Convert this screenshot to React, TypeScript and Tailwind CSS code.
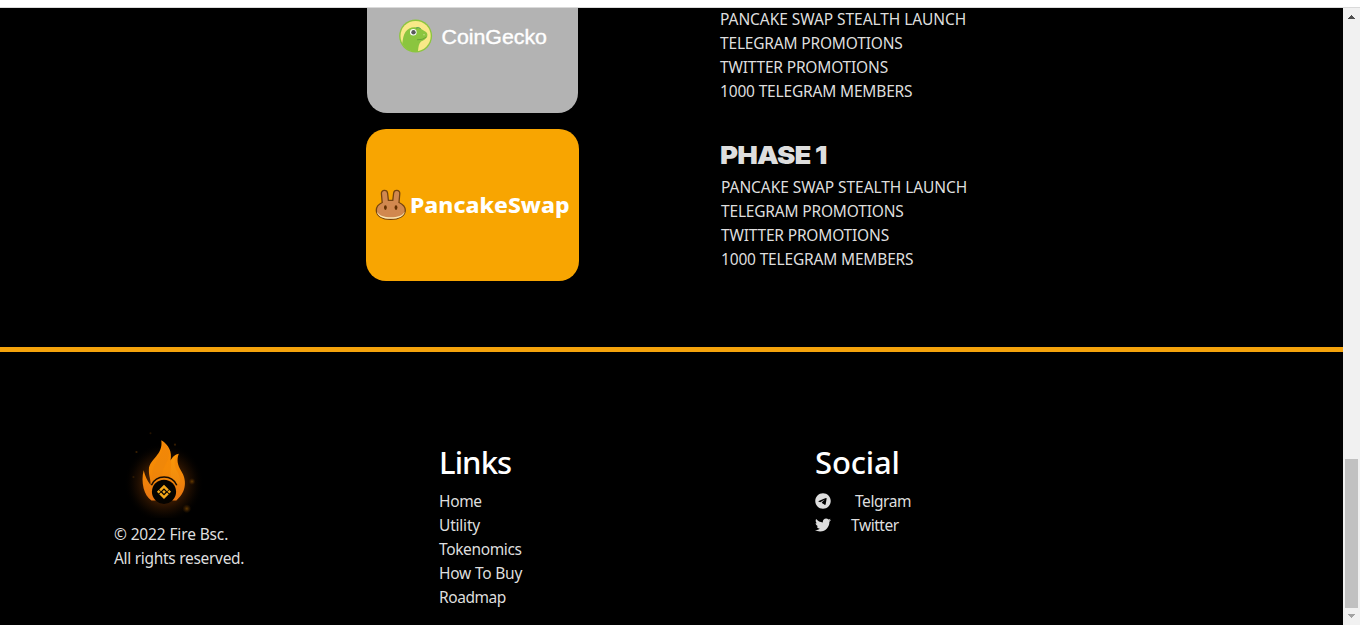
import { FaTelegram, FaTwitter } from "react-icons/fa6";

const goals = [
  { label: "PANCAKE SWAP STEALTH LAUNCH", tracking: "tracking-[-0.06px]" },
  { label: "TELEGRAM PROMOTIONS", tracking: "tracking-[-0.18px]" },
  { label: "TWITTER PROMOTIONS", tracking: "tracking-[-0.18px]" },
  { label: "1000 TELEGRAM MEMBERS", tracking: "tracking-[-0.17px]" },
];

const links = [
  { label: "Home", tracking: "tracking-[-0.35px]" },
  { label: "Utility", tracking: "tracking-[-0.2px]" },
  { label: "Tokenomics", tracking: "tracking-[-0.36px]" },
  { label: "How To Buy", tracking: "tracking-[-0.22px]" },
  { label: "Roadmap", tracking: "tracking-[-0.43px]" },
];

function GoalList() {
  return (
    <ul>
      {goals.map((goal) => (
        <li key={goal.label} className={`h-6 whitespace-nowrap ${goal.tracking}`}>
          {goal.label}
        </li>
      ))}
    </ul>
  );
}

function CoinGeckoLogo() {
  return (
    <svg width="150" height="36" viewBox="398 18 150 36" role="img" aria-label="CoinGecko">
      <circle cx="415.6" cy="36" r="16.5" fill="#8dc63f" />
      <circle cx="415.6" cy="36" r="15.1" fill="#f9e988" />
      <path
        d="M402.2 43.5C403 39 403.4 35 405.6 31.8C407.6 28.4 411.6 26.8 415.4 27.2C419.6 27.4 421.6 29.4 424.4 31C427 32.4 428 34 427.2 36.4C426 39.4 423 40 421 41.6C418.6 44 418.4 47 418 51.2C411 52.2 405.2 49.6 402.2 43.5Z"
        fill="#8bc53f"
      />
      <path d="M416 28.1Q418.5 26.6 420.6 28.6" fill="none" stroke="#4c9b54" strokeWidth="1" />
      <path d="M417 39.8Q422.5 40.2 426.6 37" fill="none" stroke="#5b9635" strokeWidth=".7" />
      <circle cx="413.3" cy="32.2" r="3.3" fill="#fff" />
      <circle cx="413.5" cy="32.3" r="2.2" fill="#58595b" />
      <circle cx="424" cy="34.8" r=".8" fill="#c3df86" />
      <text
        x="441.5"
        y="43.5"
        textLength="105.4"
        lengthAdjust="spacingAndGlyphs"
        fill="#fff"
        stroke="#fff"
        strokeWidth=".4"
        fontSize="20.5"
        fontFamily="Liberation Sans, sans-serif"
      >
        CoinGecko
      </text>
    </svg>
  );
}

function PancakeSwapLogo() {
  return (
    <svg width="198" height="36" viewBox="374 187 198 36" role="img" aria-label="PancakeSwap">
      <path
        d="M382.2 202.5L381.4 193.5C381.2 189.6 387.2 189.4 387.6 193.3L388.4 200.3H392.8L393.6 193.3C394 189.4 400 189.6 399.8 193.5L399 202.5C403 204.3 405.3 206.8 405.3 210.3C405.3 216 399 219.4 390.6 219.4C382.2 219.4 376.3 216 376.3 210.3C376.3 206.8 378.4 204.3 382.2 202.5Z"
        fill="#d1884f"
        stroke="#74430f"
        strokeWidth="1.3"
      />
      <path
        d="M377.1 211.4C379 215.6 384 217.2 390.7 217.2C397.5 217.2 402.8 215.6 404.6 211.4C404.7 216 398.7 218.8 390.7 218.8C382.6 218.8 377 216 377.1 211.4Z"
        fill="#fbe6b0"
      />
      <ellipse cx="385.4" cy="207.6" rx="1.4" ry="2.4" fill="#633001" />
      <ellipse cx="396" cy="207.6" rx="1.4" ry="2.4" fill="#633001" />
      <text
        x="410"
        y="213"
        textLength="159.5"
        lengthAdjust="spacingAndGlyphs"
        fill="#fff"
        fontSize="21"
        fontWeight="800"
        fontFamily="Noto Sans, sans-serif"
      >
        PancakeSwap
      </text>
    </svg>
  );
}

function FireLogo() {
  return (
    <svg width="100" height="88" viewBox="114 430 100 88" role="img" aria-label="Fire Bsc">
      <defs>
        <linearGradient id="flame" x1="0" y1="0" x2="0" y2="1">
          <stop offset="0" stopColor="#f88b05" />
          <stop offset=".5" stopColor="#f48a06" />
          <stop offset="1" stopColor="#e87512" />
        </linearGradient>
        <linearGradient id="flameCore" x1="0" y1="0" x2="0" y2="1">
          <stop offset="0" stopColor="#fb9705" />
          <stop offset="1" stopColor="#f08a10" />
        </linearGradient>
        <radialGradient id="glow">
          <stop offset="0" stopColor="#b85a08" stopOpacity=".7" />
          <stop offset=".5" stopColor="#7a3804" stopOpacity=".45" />
          <stop offset=".75" stopColor="#3a1a02" stopOpacity=".3" />
          <stop offset="1" stopColor="#000" stopOpacity="0" />
        </radialGradient>
        <radialGradient id="spark">
          <stop offset="0" stopColor="#a06000" stopOpacity=".6" />
          <stop offset="1" stopColor="#602f00" stopOpacity="0" />
        </radialGradient>
      </defs>
      <ellipse cx="164" cy="483" rx="40" ry="40" fill="url(#glow)" />
      <path
        d="M161.3 440.3C169 445 172.2 452 170.6 460.5C172.6 456.6 175 454.4 178.8 453.7C176.4 460 177.6 465 181.2 471C186.6 479.5 187.2 491 176.4 500.4H151.5C144 496 140.6 482 143.7 470.2C145 476 147 480 150.5 485C151 480 148.6 476 148.9 469.5C149.4 459 163.5 455 161.3 440.3Z"
        fill="url(#flame)"
      />
      <path
        d="M162.3 441.2C168.6 446 170.4 452 168 459.5C164.6 466 161 471 162.5 479H153C149.5 462 165.5 457 162.3 441.2Z"
        fill="#ec820a"
        opacity=".45"
      />
      <path
        d="M178 454.4C173.4 459 174 466 177 471C180 476.5 181.6 482 177.7 485L173 480C168 473 172.5 467 170.9 460.5C172.5 457 174.6 454.9 178 454.4Z"
        fill="url(#flameCore)"
      />
      <path d="M151.4 485.2A14 14 0 0 1 176.8 485.2" fill="none" stroke="#160b02" strokeWidth="1.5" />
      <circle cx="164" cy="491.8" r="12.1" fill="#050300" />
      <g fill="#f3a81a">
        <path d="M164 484.7L168.8 489.4L167 491.2L164 488.2L161 491.2L159.2 489.4Z" />
        <path d="M164 498.9L168.8 494.2L167 492.4L164 495.4L161 492.4L159.2 494.2Z" />
        <path d="M164 489.9L165.8 491.8L164 493.7L162.2 491.8Z" />
        <path d="M158.7 490L160.5 491.8L158.7 493.6L156.9 491.8Z" />
        <path d="M169.3 490L171.1 491.8L169.3 493.6L167.5 491.8Z" />
      </g>
      <circle cx="186.8" cy="508.7" r="4.5" fill="url(#spark)" />
      <circle cx="192" cy="481.5" r="3.5" fill="url(#spark)" />
      <circle cx="136.5" cy="452" r="1.1" fill="#3a2000" />
      <circle cx="175" cy="444.7" r="1.1" fill="#351c00" />
      <circle cx="133.5" cy="477" r="1.1" fill="#2f1900" />
      <circle cx="150.5" cy="433.3" r="1" fill="#251400" />
    </svg>
  );
}

function Scrollbar() {
  return (
    <div className="flex w-[17px] shrink-0 flex-col items-center bg-[#f1f1f1]">
      <svg className="mt-[7px]" width="7" height="4" viewBox="0 0 7 4" shapeRendering="crispEdges">
        <path d="M3 0h1v1h1v1h1v1h1v1H0V3h1V2h1V1h1z" fill="#505050" />
      </svg>
      <div className="mt-[440px] h-[149px] w-[13px] bg-[#c1c1c1]" />
      <svg className="mt-[6px]" width="7" height="4" viewBox="0 0 7 4" shapeRendering="crispEdges">
        <path d="M0 0h7v1H6v1H5v1H4v1H3V3H2V2H1V1H0z" fill="#a3a3a3" />
      </svg>
    </div>
  );
}

export default function App() {
  return (
    <div className="flex h-[625px] w-[1360px] flex-col overflow-hidden bg-white font-['Noto_Sans',sans-serif] text-[15.5px] leading-6 text-[#dedede]">
      <div className="h-2 shrink-0 border-b border-[#dadada]" />
      <div className="flex h-[617px]">
        <div className="flex w-[1343px] flex-col bg-black">
          <main className="flex h-[339px] shrink-0 pl-[366px]">
            <div className="flex w-[213px] flex-col items-center gap-4">
              <div className="flex h-[105px] w-[211px] shrink-0 justify-center rounded-b-[20px] bg-[#b3b3b3] pt-[10px]">
                <CoinGeckoLogo />
              </div>
              <div className="flex h-[152px] w-[213px] shrink-0 justify-center rounded-[20px] bg-[#f8a501] pt-[58px]">
                <PancakeSwapLogo />
              </div>
            </div>
            <div className="ml-[141px] -mt-px flex flex-col">
              <GoalList />
              <h2 className="mt-[37px] h-[35px] origin-left scale-x-110 whitespace-nowrap pt-px font-['Inter',sans-serif] text-[25px] font-black leading-7 tracking-[-0.8px]">
                PHASE 1
              </h2>
              <div className="pl-px">
                <GoalList />
              </div>
            </div>
          </main>
          <footer className="flex h-[278px] border-t-[5px] border-[#f4a30c] pl-[114px]">
            <div className="w-[325px] pt-[78px]">
              <FireLogo />
              <p className="mt-[4px] tracking-[-0.14px]">© 2022 Fire Bsc.</p>
              <p className="tracking-[-0.3px]">All rights reserved.</p>
            </div>
            <nav className="w-[376px] pt-[90px]">
              <h3 className="mb-[7px] h-10 text-[31px] font-medium leading-10 tracking-[-0.9px] text-white">Links</h3>
              <ul>
                {links.map((link) => (
                  <li key={link.label} className="h-6">
                    <a href="#" className={link.tracking}>{link.label}</a>
                  </li>
                ))}
              </ul>
            </nav>
            <div className="pt-[90px]">
              <h3 className="mb-[7px] h-10 text-[31px] font-medium leading-10 tracking-[-0.15px] text-white">Social</h3>
              <a href="#" className="flex h-6">
                <FaTelegram className="mt-[4px] mr-6 size-4" />
                <span className="tracking-[-0.45px]">Telgram</span>
              </a>
              <a href="#" className="flex h-6">
                <FaTwitter className="mt-[4px] mr-5 size-4" />
                <span className="tracking-[-0.43px]">Twitter</span>
              </a>
            </div>
          </footer>
        </div>
        <Scrollbar />
      </div>
    </div>
  );
}
